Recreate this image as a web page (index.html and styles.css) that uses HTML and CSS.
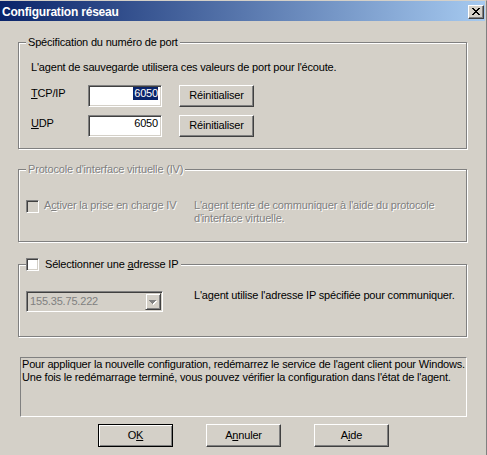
FILE: index.html
```html
<!DOCTYPE html>
<html lang="fr">
<head>
<meta charset="utf-8">
<title>Configuration réseau</title>
<link rel="stylesheet" href="styles.css">
</head>
<body>
<div class="window">
  <div class="titlebar">
    <span class="title">Configuration réseau</span>
    <span class="close-btn">
      <svg width="8" height="7" viewBox="0 0 8 7" shape-rendering="crispEdges"><path fill="#000" d="M0 0h2v1h-2z M6 0h2v1h-2z M1 1h2v1h-2z M5 1h2v1h-2z M2 2h4v1h-4z M3 3h2v1h-2z M2 4h4v1h-4z M1 5h2v1h-2z M5 5h2v1h-2z M0 6h2v1h-2z M6 6h2v1h-2z"/></svg>
    </span>
  </div>
  <div class="content">
    <div class="group group-port">
      <div class="legend">Spécification du numéro de port</div>
      <p class="intro">L'agent de sauvegarde utilisera ces valeurs de port pour l'écoute.</p>
      <div class="port-row">
        <span class="port-label"><u>T</u>CP/IP</span>
        <span class="edit"><span class="sel">6050</span></span>
        <span class="btn">Réinitialiser</span>
      </div>
      <div class="port-row port-row-2">
        <span class="port-label"><u>U</u>DP</span>
        <span class="edit">6050</span>
        <span class="btn">Réinitialiser</span>
      </div>
    </div>

    <div class="group group-iv">
      <div class="legend disabled">Protocole d'interface virtuelle (IV)</div>
      <div class="iv-row">
        <span class="check-wrap">
          <span class="check check-disabled"></span>
          <span class="check-text disabled">A<u>c</u>tiver la prise en charge IV</span>
        </span>
        <span class="iv-desc disabled">L'agent tente de communiquer à l'aide du protocole<br>d'interface virtuelle.</span>
      </div>
    </div>

    <div class="group group-ip">
      <div class="legend legend-check">
        <span class="check"></span>
        <span class="legend-check-text">Sélectionner une <u>a</u>dresse IP</span>
      </div>
      <div class="ip-row">
        <span class="combo">
          <span class="combo-text">155.35.75.222</span>
          <span class="combo-btn">
            <svg width="8" height="5" viewBox="0 0 8 5" shape-rendering="crispEdges"><path fill="#fff" d="M1 1h7v1h-7z M2 2h5v1h-5z M3 3h3v1h-3z M4 4h1v1h-1z"/><path fill="#808080" d="M0 0h7v1h-7z M1 1h5v1h-5z M2 2h3v1h-3z M3 3h1v1h-1z"/></svg>
          </span>
        </span>
        <span class="ip-desc">L'agent utilise l'adresse IP spécifiée pour communiquer.</span>
      </div>
    </div>

    <div class="info">Pour appliquer la nouvelle configuration, redémarrez le service de l'agent client pour Windows.<br>Une fois le redémarrage terminé, vous pouvez vérifier la configuration dans l'état de l'agent.</div>

    <div class="actions">
      <span class="btn btn-big btn-default">O<u>K</u></span>
      <span class="btn btn-big">A<u>n</u>nuler</span>
      <span class="btn btn-big">A<u>i</u>de</span>
    </div>
  </div>
</div>
</body>
</html>
```

FILE: styles.css
```css
html, body {
  margin: 0;
  padding: 0;
  background: #d4d0c8;
}

body {
  font-family: "Liberation Sans", Arial, sans-serif;
  font-size: 11px;
  line-height: 13px;
  letter-spacing: -0.18px;
  color: #000;
}

.window {
  box-sizing: border-box;
  width: 487px;
  height: 455px;
  background: #d4d0c8;
  border-top: 1px solid #d4d0c8;
  border-right: 1px solid #808080;
  padding-right: 1px;
  overflow: hidden;
}

.titlebar {
  height: 20px;
  display: flex;
  justify-content: space-between;
  align-items: flex-start;
  background: linear-gradient(to right, #0a246a 0%, #a6caf0 100%);
  padding-left: 2px;
}

.title {
  color: #fff;
  font-weight: bold;
  font-size: 12px;
  letter-spacing: -0.2px;
  line-height: 20px;
  padding-top: 1px;
}

.close-btn {
  box-sizing: border-box;
  width: 16px;
  height: 14px;
  margin: 4px 1px 0 0;
  background: #d4d0c8;
  border: 1px solid;
  border-color: #fff #404040 #404040 #fff;
  box-shadow: inset -1px -1px 0 #808080;
  display: flex;
  align-items: center;
  justify-content: center;
  padding: 0 1px 1px 0;
}

.close-btn svg {
  display: block;
}

.content {
  padding: 0 18px;
}

.group {
  border: 1px solid #808080;
  box-shadow: inset 1px 1px 0 #fff, 1px 1px 0 #fff;
}

.legend {
  width: fit-content;
  margin: -7px 0 0 0;
  padding: 0 2px;
  background: #d4d0c8;
  line-height: 13px;
  height: 13px;
}

.group-port .legend {
  margin-left: -5px;
}

.disabled {
  color: #808080;
  text-shadow: 1px 1px 0 #fff;
}

/* group 1 */
.group-port {
  margin-top: 21px;
  padding: 0 12px 11px 12px;
}

.intro {
  margin: 12px 0 0 0;
}

.port-row {
  display: flex;
  align-items: flex-start;
  margin-top: 11px;
  height: 22px;
}

.port-row-2 {
  margin-top: 8px;
}

.port-label {
  width: 57px;
  margin-top: 2px;
}

.edit {
  box-sizing: border-box;
  width: 74px;
  height: 22px;
  background: #fff;
  border: 1px solid;
  border-color: #808080 #fff #fff #808080;
  box-shadow: inset 1px 1px 0 #404040, inset -1px -1px 0 #d4d0c8;
  padding: 1px 3px 0 2px;
  text-align: right;
  line-height: 13px;
}

.sel {
  background: #0a246a;
  color: #fff;
  display: inline-block;
  padding-left: 1px;
}

.btn {
  box-sizing: border-box;
  display: flex;
  align-items: center;
  justify-content: center;
  width: 75px;
  height: 22px;
  background: #d4d0c8;
  border: 1px solid;
  border-color: #fff #404040 #404040 #fff;
  box-shadow: inset -1px -1px 0 #808080;
  padding-bottom: 1px;
}

.port-row .btn {
  margin-left: 17px;
}

/* group 2 */
.group-iv {
  margin-top: 20px;
  padding: 0 12px 16px 7px;
}

.iv-row {
  display: grid;
  grid-template-columns: 168px 1fr;
  margin-top: 23px;
}

.check-wrap {
  display: flex;
  align-items: flex-start;
}

.check {
  box-sizing: border-box;
  display: inline-block;
  flex: none;
  width: 13px;
  height: 13px;
  background: #fff;
  border: 1px solid;
  border-color: #808080 #fff #fff #808080;
  box-shadow: inset 1px 1px 0 #404040, inset -1px -1px 0 #d4d0c8;
}

.check-wrap .check {
  margin-top: 1px;
}

.check-disabled {
  background: #d4d0c8;
}

.check-text {
  margin-left: 5px;
}

.iv-desc {
  display: block;
  white-space: nowrap;
}

/* group 3 */
.group-ip {
  margin-top: 22px;
  padding: 0 12px 24px 7px;
}

.legend-check {
  display: flex;
  align-items: center;
  padding: 0 3px 0 0;
}

.legend-check-text {
  margin-left: 6px;
}

.ip-row {
  display: flex;
  align-items: flex-start;
  margin-top: 18px;
}

.combo {
  box-sizing: border-box;
  display: flex;
  flex: none;
  align-items: stretch;
  justify-content: space-between;
  width: 137px;
  height: 21px;
  margin-top: 2px;
  background: #d4d0c8;
  border: 1px solid;
  border-color: #808080 #fff #fff #808080;
  box-shadow: inset 1px 1px 0 #404040, inset -1px -1px 0 #d4d0c8;
  padding: 1px;
}

.combo-text {
  color: #808080;
  padding: 2px 0 0 2px;
}

.combo-btn {
  box-sizing: border-box;
  width: 16px;
  display: flex;
  align-items: center;
  justify-content: center;
  border: 1px solid;
  border-color: #d4d0c8 #404040 #404040 #d4d0c8;
  box-shadow: inset 1px 1px 0 #fff, inset -1px -1px 0 #808080;
  padding-top: 1px;
}

.combo-btn svg {
  display: block;
}

.ip-desc {
  margin-left: 31px;
  white-space: nowrap;
}

/* info */
.info {
  box-sizing: border-box;
  margin: 20px 0 0 2px;
  width: 447px;
  height: 60px;
  border: 1px solid;
  border-color: #808080 #fff #fff #808080;
  padding: 0 0 0 1px;
  white-space: nowrap;
}

/* actions */
.actions {
  display: flex;
  gap: 33px;
  margin: 7px 0 0 80px;
}

.btn-big {
  height: 23px;
}

.btn-default {
  border-color: #000;
  box-shadow: inset 1px 1px 0 #fff, inset -1px -1px 0 #808080;
}
```
